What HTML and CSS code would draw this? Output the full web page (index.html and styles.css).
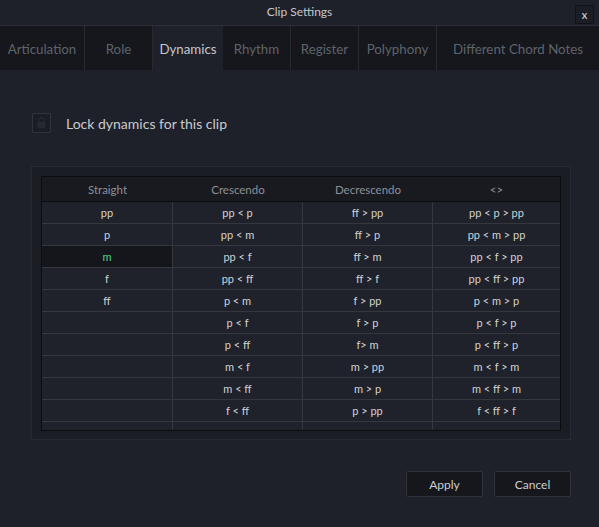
FILE: index.html
```html
<!DOCTYPE html>
<html>
<head>
<meta charset="utf-8">
<link rel="stylesheet" href="styles.css">
</head>
<body>
<div class="window">
  <div class="titlebar">
    <span></span>
    <span class="title">Clip Settings</span>
    <span class="close">x</span>
  </div>
  <div class="tabs">
    <div class="tab w1">Articulation</div>
    <div class="tab w2">Role</div>
    <div class="tab w3 active">Dynamics</div>
    <div class="tab w4">Rhythm</div>
    <div class="tab w5">Register</div>
    <div class="tab w6">Polyphony</div>
    <div class="tab w7">Different Chord Notes</div>
  </div>
  <div class="content">
    <div class="lockrow">
      <div class="checkbox">
        <svg width="11" height="12" viewBox="0 0 11 12"><path d="M3 5V3.5a2.5 2.5 0 0 1 5 0V5" fill="none" stroke="#262930" stroke-width="1.3"/><rect x="1.5" y="5" width="8" height="6" rx="1" fill="#262930"/></svg>
      </div>
      <span class="locklabel">Lock dynamics for this clip</span>
    </div>
    <div class="frame">
      <div class="table">
        <div class="thead">
          <div class="th">Straight</div>
          <div class="th">Crescendo</div>
          <div class="th">Decrescendo</div>
          <div class="th">&lt;&gt;</div>
        </div>
        <div class="tbody">
          <div class="row"><div class="td">pp</div><div class="td">pp &lt; p</div><div class="td">ff &gt; pp</div><div class="td">pp &lt; p &gt; pp</div></div>
          <div class="row"><div class="td">p</div><div class="td">pp &lt; m</div><div class="td">ff &gt; p</div><div class="td">pp &lt; m &gt; pp</div></div>
          <div class="row"><div class="td sel">m</div><div class="td">pp &lt; f</div><div class="td">ff &gt; m</div><div class="td">pp &lt; f &gt; pp</div></div>
          <div class="row"><div class="td">f</div><div class="td">pp &lt; ff</div><div class="td">ff &gt; f</div><div class="td">pp &lt; ff &gt; pp</div></div>
          <div class="row"><div class="td">ff</div><div class="td">p &lt; m</div><div class="td">f &gt; pp</div><div class="td">p &lt; m &gt; p</div></div>
          <div class="row"><div class="td"></div><div class="td">p &lt; f</div><div class="td">f &gt; p</div><div class="td">p &lt; f &gt; p</div></div>
          <div class="row"><div class="td"></div><div class="td">p &lt; ff</div><div class="td">f&gt; m</div><div class="td">p &lt; ff &gt; p</div></div>
          <div class="row"><div class="td"></div><div class="td">m &lt; f</div><div class="td">m &gt; pp</div><div class="td">m &lt; f &gt; m</div></div>
          <div class="row"><div class="td"></div><div class="td">m &lt; ff</div><div class="td">m &gt; p</div><div class="td">m &lt; ff &gt; m</div></div>
          <div class="row"><div class="td"></div><div class="td">f &lt; ff</div><div class="td">p &gt; pp</div><div class="td">f &lt; ff &gt; f</div></div>
          <div class="row"><div class="td"></div><div class="td"></div><div class="td"></div><div class="td"></div></div>
        </div>
      </div>
    </div>
    <div class="buttons">
      <button class="btn">Apply</button>
      <button class="btn">Cancel</button>
    </div>
  </div>
</div>
</body>
</html>
```
FILE: styles.css
```css
html, body {
  margin: 0;
  padding: 0;
  background: #1f212a;
}
body {
  font-family: Lato, "Open Sans", sans-serif;
  width: 599px;
  height: 527px;
  overflow: hidden;
}
.window {
  width: 599px;
  height: 527px;
  background: #1f212a;
}
.titlebar {
  display: grid;
  grid-template-columns: 1fr auto 1fr;
  align-items: center;
  border-bottom: 1px solid #2c2f37;
  box-sizing: border-box;
  height: 26px;
}
.title {
  color: #c6c7cb;
  font-size: 12px;
  margin-top: -2px;
}
.close {
  justify-self: end;
  margin-right: 5px;
  margin-top: 3px;
  width: 17px;
  height: 17px;
  border: 1px solid #121318;
  background: #1c1e25;
  color: #e0e0e0;
  font-size: 11px;
  display: flex;
  align-items: center;
  justify-content: center;
  line-height: 1;
}
.tabs {
  display: flex;
  height: 44px;
  background: #15171c;
}
.tab {
  box-sizing: border-box;
  border-right: 1px solid #262930;
  display: flex;
  align-items: center;
  justify-content: center;
  color: #5f636b;
  font-size: 13.3px;
  padding-top: 2px;
}
.tab.active {
  background: #1f212a;
  color: #c5c7cc;
  border-right: none;
}
.w1 { width: 85px; }
.w2 { width: 68px; }
.w3 { width: 70px; }
.w4 { width: 68px; }
.w5 { width: 68px; }
.w6 { width: 78px; }
.w7 { flex: 1; border-right: none; }
.content {
  padding: 43px 28px 0 31px;
}
.lockrow {
  display: flex;
  align-items: center;
  height: 20px;
}
.checkbox {
  box-sizing: border-box;
  width: 19px;
  height: 20px;
  margin-left: 1px;
  border: 1px solid #30333b;
  border-radius: 1px;
  background: #1b1d24;
  display: flex;
  align-items: center;
  justify-content: center;
}
.locklabel {
  margin-left: 15px;
  color: #c9cacd;
  font-size: 14px;
}
.frame {
  margin-top: 33px;
  box-sizing: border-box;
  width: 540px;
  height: 274px;
  padding: 9px;
  border: 1px solid #272a31;
  background: #1b1d24;
}
.table {
  box-sizing: border-box;
  width: 520px;
  height: 255px;
  border: 1px solid #0b0c0f;
  display: flex;
  flex-direction: column;
  overflow: hidden;
}
.thead {
  display: grid;
  grid-template-columns: 131px 130px 130px 1fr;
  height: 25px;
  background: #181a20;
  border-bottom: 1px solid #0b0c0f;
  box-sizing: border-box;
}
.th {
  display: flex;
  align-items: center;
  justify-content: center;
  color: #8e9097;
  font-size: 11.5px;
}
.tbody {
  flex: 1;
  overflow: hidden;
  background: #1f222a;
}
.row {
  display: grid;
  grid-template-columns: 131px 130px 130px 1fr;
  height: 22px;
  box-sizing: border-box;
  border-bottom: 1px solid #34373e;
}
.td {
  display: flex;
  align-items: center;
  justify-content: center;
  color: #d2d3d6;
  font-size: 11px;
  border-right: 1px solid #34373e;
}
.td:last-child {
  border-right: none;
}
.td.sel {
  background: #14161b;
  color: #4fd592;
}
.buttons {
  display: flex;
  justify-content: flex-end;
  gap: 11px;
  margin-top: 31px;
  width: 540px;
}
.btn {
  box-sizing: border-box;
  width: 77px;
  height: 26px;
  background: #15171d;
  border: 1px solid #30333a;
  border-radius: 2px;
  color: #cbcccf;
  font-family: Lato, "Open Sans", sans-serif;
  font-size: 12px;
  padding: 0;
}
```
